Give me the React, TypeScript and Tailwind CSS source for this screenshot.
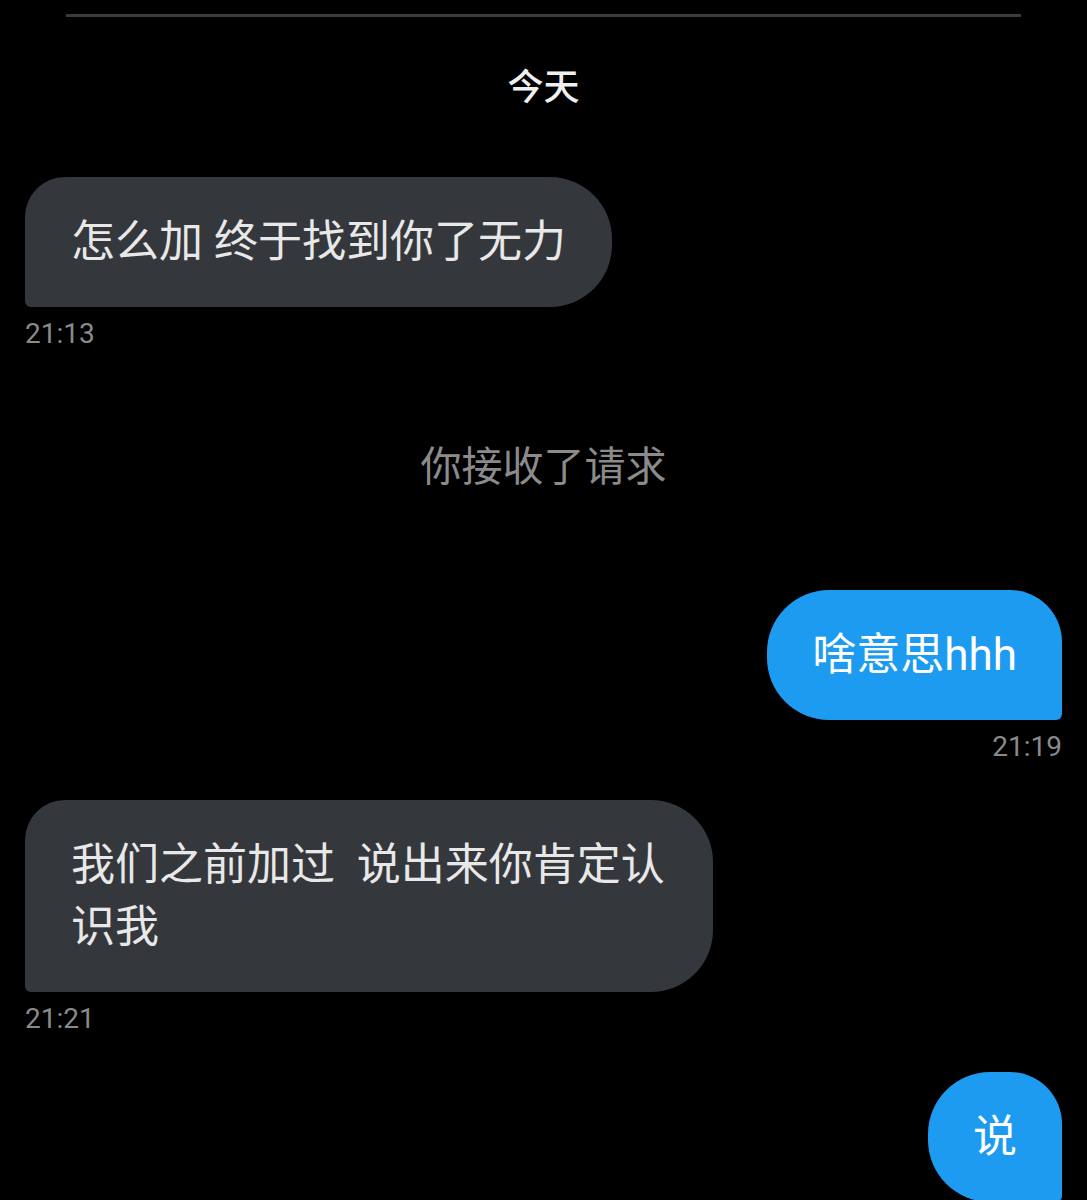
const font = { fontFamily: 'Roboto, "Noto Sans CJK SC", sans-serif' };

const Received = ({ text, time }: { text: string; time: string }) => (
    <div className="flex flex-col items-start">
        <div className="max-w-[688px] bg-[#34373b] text-[#e8e8e8] text-[44px] leading-[62px] px-[46px] py-[34px] rounded-tl-[40px] rounded-r-[62px] rounded-bl-[6px] whitespace-pre-wrap">
            {text}
        </div>
        <div className="mt-[10px] text-[28px] leading-[34px] text-[#8a8a8a]">{time}</div>
    </div>
);

const Sent = ({ text, time }: { text: string; time?: string }) => (
    <div className="flex flex-col items-end">
        <div className="max-w-[688px] bg-[#1d9bf0] text-white text-[44px] leading-[62px] px-[45px] py-[34px] rounded-l-[62px] rounded-tr-[52px] rounded-br-[6px]">
            {text}
        </div>
        {time && <div className="mt-[10px] text-[28px] leading-[34px] text-[#8a8a8a]">{time}</div>}
    </div>
);

export default function App() {
    return (
        <div className="w-[1087px] h-[1200px] bg-black overflow-hidden" style={font}>
            <div className="mt-[14px] mx-[66px] h-[3px] bg-[#3c3c3c]" />
            <div className="mt-[49px] text-center text-[36px] leading-[44px] font-medium text-[#f0f0f0]">今天</div>

            <div className="px-[25px]">
                <div className="mt-[67px]">
                    <Received text="怎么加 终于找到你了无力" time="21:13" />
                </div>

                <div className="mt-[91px] text-center text-[41px] leading-[50px] text-[#8b8b8b]">你接收了请求</div>

                <div className="mt-[98px]">
                    <Sent text="啥意思hhh" time="21:19" />
                </div>

                <div className="mt-[36px]">
                    <Received text="我们之前加过  说出来你肯定认识我" time="21:21" />
                </div>

                <div className="mt-[36px]">
                    <Sent text="说" />
                </div>
            </div>
        </div>
    );
}
